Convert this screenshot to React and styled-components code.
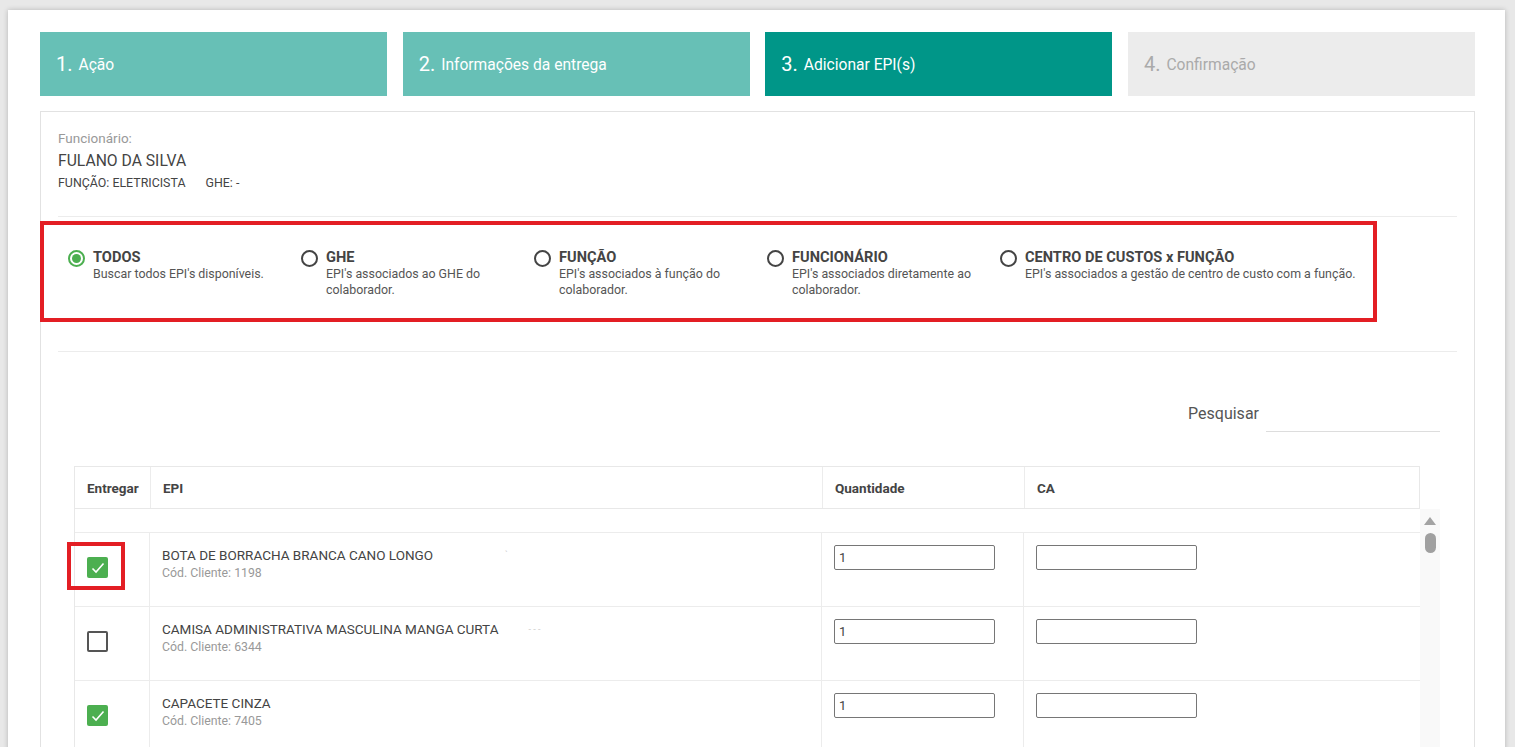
import React from 'react';
import styled, { createGlobalStyle } from 'styled-components';

const GlobalStyle = createGlobalStyle`
  html, body {
    margin: 0;
    padding: 0;
    overflow: hidden;
    background: #e8e8e8;
  }
  body {
    font-family: Roboto, "Liberation Sans", Arial, sans-serif;
    color: #444;
  }
  * { box-sizing: border-box; }
`;

const Card = styled.div`
  margin: 10px 10px 0 8px;
  background: #fff;
  box-shadow: 0 0 5px rgba(0, 0, 0, 0.22);
  padding: 22px 30px 40px 32px;
  min-height: 900px;
`;

const Steps = styled.div`
  display: grid;
  grid-template-columns: repeat(4, 1fr);
  gap: 15.6px;
`;

const stepBg = { done: '#67c0b6', active: '#009688', todo: '#ececec' };

const Step = styled.div`
  height: 64px;
  display: flex;
  align-items: center;
  padding-left: 16px;
  background: ${p => stepBg[p.$state]};
  color: ${p => (p.$state === 'todo' ? '#aaa' : '#fff')};
`;

const StepNum = styled.span`
  font-size: 20px;
  margin-right: 6px;
`;

const StepLabel = styled.span`
  font-size: 15.6px;
  position: relative;
  top: 1px;
`;

const Panel = styled.div`
  margin-top: 15px;
  border: 1px solid #e2e2e2;
  padding: 19px 17px 0;
  min-height: 800px;
`;

const Label = styled.div`
  font-size: 13.5px;
  line-height: 15px;
  color: #999;
`;

const Name = styled.div`
  margin-top: 5px;
  font-size: 15.7px;
  line-height: 19px;
  color: #444;
`;

const Meta = styled.div`
  margin-top: 6px;
  font-size: 12.4px;
  line-height: 14px;
  color: #444;
  display: flex;
  gap: 20px;
`;

const Divider = styled.div`
  height: 1px;
  background: #ececec;
  margin-top: ${p => p.$top || 0}px;
`;

const RadioGroup = styled.div`
  margin: 4px 0 0 -18px;
  width: 1337px;
  border: 4px solid ${p => (p.$highlight ? '#e31e24' : 'transparent')};
  padding: 24px 0 20px 24px;
  display: grid;
  grid-template-columns: repeat(4, 233px) auto;
`;

const Option = styled.div`
  display: flex;
  align-items: flex-start;
  gap: 8px;
`;

const Radio = styled.span`
  flex: none;
  width: 17px;
  height: 17px;
  margin-top: 1px;
  border-radius: 50%;
  border: 2px solid ${p => (p.$checked ? '#4caf50' : '#444')};
  display: flex;
  align-items: center;
  justify-content: center;
  &::after {
    content: '';
    width: 9px;
    height: 9px;
    border-radius: 50%;
    background: ${p => (p.$checked ? '#4caf50' : 'transparent')};
  }
`;

const OptionText = styled.div`
  max-width: 198px;
  ${p => p.$wide && 'max-width: none;'}
`;

const OptionTitle = styled.div`
  font-size: 14.6px;
  font-weight: 700;
  line-height: 17px;
  color: #444;
`;

const OptionDesc = styled.div`
  font-size: 12.4px;
  line-height: 16px;
  color: #555;
`;

const Section = styled.div`
  padding: 0 17px 0 16px;
`;

const SearchRow = styled.div`
  margin-top: 49px;
  display: flex;
  justify-content: flex-end;
  align-items: flex-start;
  gap: 7px;
`;

const SearchLabel = styled.label`
  font-size: 16px;
  line-height: 19px;
  color: #555;
  margin-top: 3px;
`;

const SearchInput = styled.input`
  width: 174px;
  height: 31px;
  border: none;
  border-bottom: 1px solid #ddd;
  outline: none;
  font: inherit;
`;

const Table = styled.div`
  margin-top: 34px;
`;

const cols = '76px 672px 202px 1fr';

const HeadRow = styled.div`
  margin-right: 20px;
  display: grid;
  grid-template-columns: ${cols};
  border: 1px solid #e8e8e8;
  height: 43px;
`;

const HeadCell = styled.div`
  display: flex;
  align-items: center;
  padding: 0 12px;
  font-size: 13.5px;
  font-weight: 700;
  color: #444;
  border-right: ${p => (p.$last ? 'none' : '1px solid #ececec')};
`;

const BodyWrap = styled.div`
  display: flex;
`;

const Body = styled.div`
  flex: 1;
  border-left: 1px solid #e8e8e8;
`;

const Spacer = styled.div`
  height: 24px;
  border-bottom: 1px solid #ececec;
`;

const Row = styled.div`
  display: grid;
  grid-template-columns: 75px 672px 202px 1fr;
  height: 74px;
  border-bottom: 1px solid #ececec;
`;

const Cell = styled.div`
  padding: ${p => p.$top || 12}px 12px 0;
  border-right: ${p => (p.$last ? 'none' : '1px solid #ececec')};
`;

const CheckWrap = styled.div`
  position: relative;
  width: 21px;
  height: 21px;
  ${p => p.$highlight && `
    &::before {
      content: '';
      position: absolute;
      left: -20px;
      top: -15px;
      width: 58px;
      height: 48px;
      border: 4px solid #e31e24;
      box-sizing: border-box;
    }
  `}
`;

const Check = styled.span`
  display: flex;
  align-items: center;
  justify-content: center;
  width: 21px;
  height: 21px;
  border-radius: 2px;
  background: ${p => (p.$checked ? '#4caf50' : '#fff')};
  border: ${p => (p.$checked ? 'none' : '2px solid #555')};
`;

const ItemName = styled.div`
  font-size: 13.5px;
  line-height: 16px;
  color: #444;
`;

const Ghost = styled.span`
  margin-left: ${p => p.$gap}px;
  color: #ccc;
  font-size: 9px;
  vertical-align: top;
`;

const ItemCode = styled.div`
  margin-top: 3px;
  font-size: 12.3px;
  line-height: 14px;
  color: #999;
`;

const Field = styled.input`
  width: 161px;
  height: 25px;
  border: 1px solid #767676;
  border-radius: 2px;
  padding: 0 4px;
  font-family: Roboto, "Liberation Sans", Arial, sans-serif;
  font-size: 13px;
  color: #444;
  outline: none;
`;

const Track = styled.div`
  width: 20px;
  flex: none;
  background: #f9f9f9;
  display: flex;
  flex-direction: column;
  align-items: center;
  padding-top: 8px;
`;

const Thumb = styled.div`
  margin-top: 8px;
  width: 11px;
  height: 20px;
  border-radius: 6px;
  background: #a0a0a0;
`;

const steps = [
  { n: '1.', label: 'Ação', state: 'done' },
  { n: '2.', label: 'Informações da entrega', state: 'done' },
  { n: '3.', label: 'Adicionar EPI(s)', state: 'active' },
  { n: '4.', label: 'Confirmação', state: 'todo' },
];

const options = [
  { title: 'TODOS', desc: "Buscar todos EPI's disponíveis.", checked: true },
  { title: 'GHE', desc: "EPI's associados ao GHE do colaborador." },
  { title: 'FUNÇÃO', desc: "EPI's associados à função do colaborador." },
  { title: 'FUNCIONÁRIO', desc: "EPI's associados diretamente ao colaborador." },
  { title: 'CENTRO DE CUSTOS x FUNÇÃO', desc: "EPI's associados a gestão de centro de custo com a função.", wide: true },
];

const items = [
  { name: 'BOTA DE BORRACHA BRANCA CANO LONGO', code: '1198', checked: true, highlight: true, ghost: '`', gap: 72 },
  { name: 'CAMISA ADMINISTRATIVA MASCULINA MANGA CURTA', code: '6344', ghost: '- - -', gap: 30 },
  { name: 'CAPACETE CINZA', code: '7405', checked: true },
];

function CheckIcon() {
  return (
    <svg width="14" height="12" viewBox="0 0 14 12">
      <polyline points="1.5,6.5 5,10 12.5,1.5" fill="none" stroke="#fff" strokeWidth="1.6" />
    </svg>
  );
}

function ScrollUp() {
  return (
    <svg width="12" height="8" viewBox="0 0 12 8">
      <polygon points="6,0 12,8 0,8" fill="#a3a3a3" />
    </svg>
  );
}

export default function App() {
  return (
    <>
      <GlobalStyle />
      <Card>
        <Steps>
          {steps.map(s => (
            <Step key={s.n} $state={s.state}>
              <StepNum>{s.n}</StepNum>
              <StepLabel>{s.label}</StepLabel>
            </Step>
          ))}
        </Steps>

        <Panel>
          <Label>Funcionário:</Label>
          <Name>FULANO DA SILVA</Name>
          <Meta>
            <span>FUNÇÃO: ELETRICISTA</span>
            <span>GHE: -</span>
          </Meta>
          <Divider $top={26} />

          <RadioGroup $highlight>
            {options.map(o => (
              <Option key={o.title}>
                <Radio $checked={o.checked} />
                <OptionText $wide={o.wide}>
                  <OptionTitle>{o.title}</OptionTitle>
                  <OptionDesc>{o.desc}</OptionDesc>
                </OptionText>
              </Option>
            ))}
          </RadioGroup>
          <Divider $top={29} />

          <Section>
            <SearchRow>
              <SearchLabel>Pesquisar</SearchLabel>
              <SearchInput />
            </SearchRow>

            <Table>
              <HeadRow>
                <HeadCell>Entregar</HeadCell>
                <HeadCell>EPI</HeadCell>
                <HeadCell>Quantidade</HeadCell>
                <HeadCell $last>CA</HeadCell>
              </HeadRow>
              <BodyWrap>
                <Body>
                  <Spacer />
                  {items.map(it => (
                    <Row key={it.code}>
                      <Cell $top={24}>
                        <CheckWrap $highlight={it.highlight}>
                          <Check $checked={it.checked}>{it.checked && <CheckIcon />}</Check>
                        </CheckWrap>
                      </Cell>
                      <Cell $top={14}>
                        <ItemName>
                          {it.name}
                          {it.ghost && <Ghost $gap={it.gap}>{it.ghost}</Ghost>}
                        </ItemName>
                        <ItemCode>Cód. Cliente: {it.code}</ItemCode>
                      </Cell>
                      <Cell>
                        <Field defaultValue="1" />
                      </Cell>
                      <Cell $last>
                        <Field defaultValue="" />
                      </Cell>
                    </Row>
                  ))}
                </Body>
                <Track>
                  <ScrollUp />
                  <Thumb />
                </Track>
              </BodyWrap>
            </Table>
          </Section>
        </Panel>
      </Card>
    </>
  );
}
